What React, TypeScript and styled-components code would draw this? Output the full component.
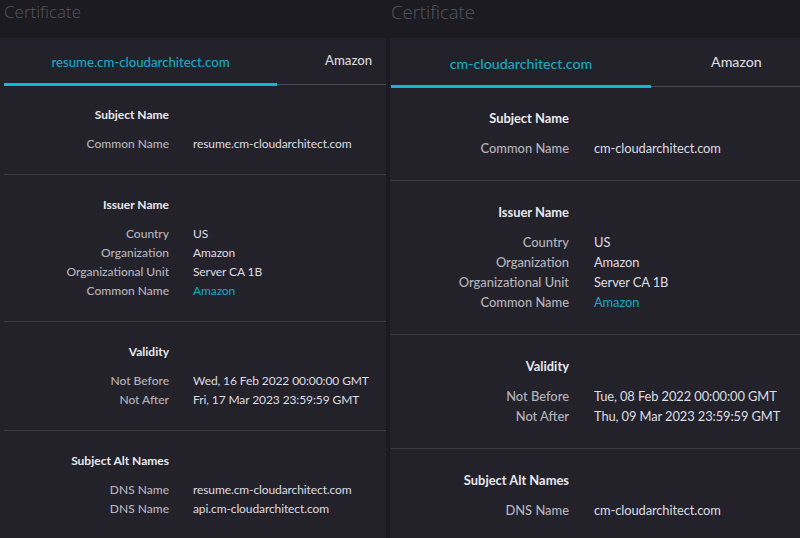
import React from "react";
import styled, { createGlobalStyle } from "styled-components";

const Global = createGlobalStyle`
  html, body { margin: 0; padding: 0; background: #1c1b22; }
  body { width: 800px; height: 538px; overflow: hidden; font-family: Lato, "Liberation Sans", sans-serif; }
`;

type Scale = { s: number };

const Page = styled.div`
  display: flex;
  width: 800px;
  height: 538px;
  background: #1c1b22;
  gap: 4px;
`;

const Column = styled.div<{ $w: number }>`
  width: ${(p) => p.$w}px;
  display: flex;
  flex-direction: column;
  flex-shrink: 0;
`;

const Title = styled.div<Scale & { $pl: number }>`
  flex-shrink: 0;
  height: 38px;
  padding: 1px 0 0 ${(p) => p.$pl}px;
  font-family: "Open Sans", sans-serif;
  font-weight: 300;
  font-size: ${(p) => (p.s > 1 ? 18.5 : 17)}px;
  line-height: 22px;
  color: #55545d;
  box-sizing: border-box;
`;

const Panel = styled.div<{ $pl: number }>`
  flex: 1;
  min-height: 0;
  background: #23222b;
  padding-left: ${(p) => p.$pl}px;
  display: flex;
  flex-direction: column;
  overflow: hidden;
`;

const Tabs = styled.div<Scale>`
  flex-shrink: 0;
  display: flex;
  height: ${(p) => (p.s > 1 ? 49 : 47)}px;
  border-bottom: 1px solid #4a4955;
  box-sizing: border-box;
`;

const Tab = styled.div<Scale & { $active?: boolean; $w?: number; $pl?: number }>`
  ${(p) => (p.$w ? `width: ${p.$w}px;` : "flex: 1;")}
  display: flex;
  align-items: flex-end;
  justify-content: ${(p) => (p.$active ? "center" : "flex-start")};
  padding-left: ${(p) => p.$pl ?? 0}px;
  padding-bottom: ${(p) => (p.s > 1 ? 13 : 13)}px;
  box-sizing: border-box;
  font-size: ${(p) => (p.s > 1 ? 14.2 : 13.2)}px;
  line-height: 16px;
  font-weight: 500;
  color: ${(p) => (p.$active ? "#1ba7c6" : "#d9d8de")};
  border-bottom: 3px solid ${(p) => (p.$active ? "#12b6d6" : "transparent")};
  margin-bottom: ${(p) => (p.$active ? -2 : 0)}px;
`;

const Section = styled.section<Scale>`
  flex-shrink: 0;
  padding: ${(p) => (p.s > 1 ? 23 : 22)}px 0 ${(p) => (p.s > 1 ? 22 : 21)}px;
  border-bottom: 1px solid #3b3a45;
  display: grid;
  grid-template-columns: ${(p) => (p.s > 1 ? 178 : 165)}px 1fr;
  column-gap: ${(p) => (p.s > 1 ? 25 : 24)}px;
  font-size: ${(p) => 12 * p.s}px;
  &:last-child { border-bottom: none; }
`;

const Heading = styled.div<Scale>`
  grid-column: 1;
  text-align: right;
  font-weight: 700;
  color: #e9e8ee;
  line-height: ${(p) => (p.s > 1 ? 17 : 16)}px;
  margin-bottom: 11px;
`;

const Label = styled.div<Scale>`
  grid-column: 1;
  text-align: right;
  color: #b5b4bc;
  font-weight: 500;
  line-height: ${(p) => (p.s > 1 ? 20 : 19)}px;
  white-space: nowrap;
`;

const Value = styled.div<Scale & { $link?: boolean }>`
  grid-column: 2;
  color: ${(p) => (p.$link ? "#14a9c9" : "#dddce2")};
  line-height: ${(p) => (p.s > 1 ? 20 : 19)}px;
  letter-spacing: -0.1px;
  white-space: nowrap;
`;

type Row = [string, string, boolean?];
type Sec = { title: string; rows: Row[] };

type Cert = {
  width: number;
  s: number;
  pl: number;
  activeW: number;
  amazonPl: number;
  domain: string;
  sections: Sec[];
};

const issuer: Sec = {
  title: "Issuer Name",
  rows: [
    ["Country", "US"],
    ["Organization", "Amazon"],
    ["Organizational Unit", "Server CA 1B"],
    ["Common Name", "Amazon", true],
  ],
};

const certs: Cert[] = [
  {
    width: 386,
    s: 1,
    pl: 4,
    activeW: 273,
    amazonPl: 48,
    domain: "resume.cm-cloudarchitect.com",
    sections: [
      { title: "Subject Name", rows: [["Common Name", "resume.cm-cloudarchitect.com"]] },
      issuer,
      {
        title: "Validity",
        rows: [
          ["Not Before", "Wed, 16 Feb 2022 00:00:00 GMT"],
          ["Not After", "Fri, 17 Mar 2023 23:59:59 GMT"],
        ],
      },
      {
        title: "Subject Alt Names",
        rows: [
          ["DNS Name", "resume.cm-cloudarchitect.com"],
          ["DNS Name", "api.cm-cloudarchitect.com"],
        ],
      },
    ],
  },
  {
    width: 410,
    s: 1.075,
    pl: 1,
    activeW: 260,
    amazonPl: 60,
    domain: "cm-cloudarchitect.com",
    sections: [
      { title: "Subject Name", rows: [["Common Name", "cm-cloudarchitect.com"]] },
      issuer,
      {
        title: "Validity",
        rows: [
          ["Not Before", "Tue, 08 Feb 2022 00:00:00 GMT"],
          ["Not After", "Thu, 09 Mar 2023 23:59:59 GMT"],
        ],
      },
      { title: "Subject Alt Names", rows: [["DNS Name", "cm-cloudarchitect.com"]] },
    ],
  },
];

function CertView({ c }: { c: Cert }) {
  return (
    <Column $w={c.width}>
      <Title s={c.s} $pl={c.pl}>Certificate</Title>
      <Panel $pl={c.pl}>
        <Tabs s={c.s}>
          <Tab s={c.s} $active $w={c.activeW}>{c.domain}</Tab>
          <Tab s={c.s} $pl={c.amazonPl}>Amazon</Tab>
        </Tabs>
        {c.sections.map((sec, i) => (
          <Section s={c.s} key={i}>
            <Heading s={c.s}>{sec.title}</Heading>
            {sec.rows.map(([l, v, link], j) => (
              <React.Fragment key={j}>
                <Label s={c.s}>{l}</Label>
                <Value s={c.s} $link={link}>{v}</Value>
              </React.Fragment>
            ))}
          </Section>
        ))}
      </Panel>
    </Column>
  );
}

export default function App() {
  return (
    <>
      <Global />
      <Page>
        {certs.map((c, i) => (
          <CertView c={c} key={i} />
        ))}
      </Page>
    </>
  );
}
